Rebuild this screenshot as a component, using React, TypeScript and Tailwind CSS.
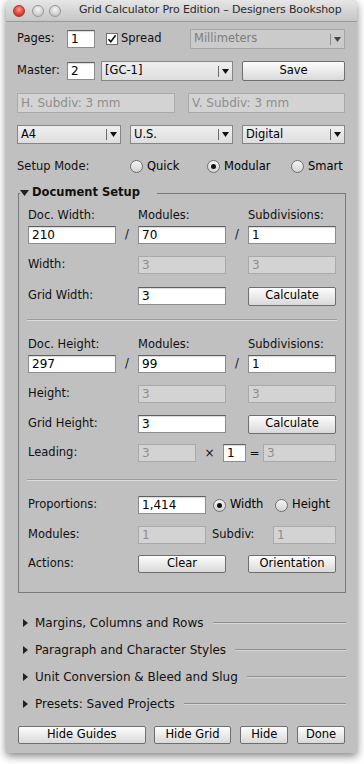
import React from "react";

/* ------------------------------------------------------------------ */
/*  Small controls                                                      */
/* ------------------------------------------------------------------ */
function TextField({ value, className = "" }: { value: string; className?: string }) {
  return (
    <div
      className={`h-[18px] bg-white border border-[#8c8c8c] border-t-[#5f5f5f] shadow-[inset_0_1px_1px_rgba(0,0,0,0.15)] pl-[3px] text-[12px] leading-[16px] text-black ${className}`}
    >
      {value}
    </div>
  );
}

function DisabledField({ value, className = "" }: { value: string; className?: string }) {
  return (
    <div
      className={`h-[18px] bg-[#d3d3d3] border border-[#a9a9a9] pl-[3px] text-[12px] leading-[16px] text-[#8e8e8e] ${className}`}
    >
      {value}
    </div>
  );
}

function Button({ label, className = "" }: { label: string; className?: string }) {
  return (
    <div
      className={`h-[18px] flex items-center justify-center bg-gradient-to-b from-[#fdfdfd] to-[#d9d9d9] border border-[#6f6f6f] rounded-[2px] text-[11.5px] text-black ${className}`}
    >
      {label}
    </div>
  );
}

function Popup({
  label,
  disabled = false,
  className = "",
}: {
  label: string;
  disabled?: boolean;
  className?: string;
}) {
  return (
    <div
      className={`flex items-center border ${
        disabled
          ? "bg-[#cbcbcb] border-[#a6a6a6] text-[#7d7d7d]"
          : "bg-gradient-to-b from-[#efefef] to-[#dedede] border-[#858585] text-black"
      } pl-[3px] text-[11.5px] ${className}`}
    >
      <span className="flex-1">{label}</span>
      <span className={`w-px h-[11px] ${disabled ? "bg-[#8d8d8d]" : "bg-[#6b6b6b]"}`} />
      <span className="w-[13px] flex justify-center">
        <svg width="7" height="5" viewBox="0 0 7 5">
          <path d="M0 0h7L3.5 5z" fill={disabled ? "#444" : "#111"} />
        </svg>
      </span>
    </div>
  );
}

function Radio({ label, checked = false, className = "" }: { label: string; checked?: boolean; className?: string }) {
  return (
    <div className={`flex items-center ${className}`}>
      <span className="w-[13px] h-[13px] rounded-full border border-[#6e6e6e] bg-gradient-to-b from-[#f4f4f4] to-[#d4d4d4] flex items-center justify-center">
        {checked && <span className="w-[5px] h-[5px] rounded-full bg-[#111]" />}
      </span>
      <span className="ml-[4px] text-[11.5px] text-black">{label}</span>
    </div>
  );
}

function Disclosure({ label }: { label: string }) {
  return (
    <div className="h-[27px] flex items-center pl-[6px]">
      <svg width="5" height="8" viewBox="0 0 5 8">
        <path d="M0 0l5 4-5 4z" fill="#222" />
      </svg>
      <span className="ml-[7px] text-[12px] text-[#111]">{label}</span>
      <div className="flex-1 ml-[9px] mr-[-1px] border-t border-[#8e8e8e] border-b border-b-[#d6d6d6]" />
    </div>
  );
}

function Separator() {
  return <div className="-ml-[1px] w-[310px] border-t border-[#9c9c9c] border-b border-b-[#dedede]" />;
}

/* ------------------------------------------------------------------ */
/*  App                                                                 */
/* ------------------------------------------------------------------ */
export default function App() {
  return (
    <div className="w-[364px] h-[764px] bg-white font-['DejaVu_Sans',sans-serif] text-[11.5px] text-[#111] overflow-hidden">
      <div className="ml-[6px] w-[351px] h-[753px] bg-[#c0c0c0] rounded-t-[5px] shadow-[0_3px_9px_rgba(0,0,0,0.5)] flex flex-col">
        {/* Title bar */}
        <div className="h-[22px] flex items-center rounded-t-[5px] bg-gradient-to-b from-[#e6e6e6] to-[#c6c6c6] border-b border-[#9a9a9a]">
          <span className="ml-[7px] w-[12px] h-[12px] rounded-full border border-[#a5362f] bg-[radial-gradient(circle_at_50%_35%,#ff9c92,#e0443a_55%,#b8241c)]" />
          <span className="ml-[7px] w-[12px] h-[12px] rounded-full border border-[#979797] bg-[radial-gradient(circle_at_50%_35%,#f6f6f6,#d0d0d0_60%,#b4b4b4)]" />
          <span className="ml-[5px] w-[12px] h-[12px] rounded-full border border-[#979797] bg-[radial-gradient(circle_at_50%_35%,#f6f6f6,#d0d0d0_60%,#b4b4b4)]" />
          <span className="ml-[18px] text-[11px] tracking-[-0.15px] text-[#2b2b2b]">
            Grid Calculator Pro Edition – Designers Bookshop
          </span>
        </div>

        <div className="pl-[11px] pr-[12px] pt-[7px]">
          {/* Pages */}
          <div className="h-[20px] flex items-center">
            <span className="w-[50px]">Pages:</span>
            <TextField value="1" className="w-[28px]" />
            <span className="ml-[11px] w-[12px] h-[12px] bg-white border border-[#6d6d6d] flex items-center justify-center">
              <svg width="10" height="10" viewBox="0 0 10 10">
                <path d="M1.5 5.2l2.3 2.6L8.6 1.2" fill="none" stroke="#111" strokeWidth="1.6" />
              </svg>
            </span>
            <span className="ml-[3px]">Spread</span>
            <Popup label="Millimeters" disabled className="ml-auto w-[155px] h-[20px]" />
          </div>

          {/* Master */}
          <div className="mt-[12px] h-[20px] flex items-center">
            <span className="w-[50px]">Master:</span>
            <TextField value="2" className="w-[28px]" />
            <Popup label="[GC-1]" className="ml-[6px] w-[132px] h-[20px]" />
            <Button label="Save" className="ml-[9px] w-[103px] !h-[20px]" />
          </div>

          {/* Subdivisions */}
          <div className="mt-[12px] h-[20px] flex items-center justify-between">
            <DisabledField value="H. Subdiv: 3 mm" className="w-[158px] !h-[20px] leading-[18px]" />
            <DisabledField value="V. Subdiv: 3 mm" className="w-[157px] !h-[20px] leading-[18px]" />
          </div>

          {/* Formats */}
          <div className="mt-[12px] h-[19px] flex items-center justify-between">
            <Popup label="A4" className="w-[104px] h-[19px]" />
            <Popup label="U.S." className="w-[103px] h-[19px]" />
            <Popup label="Digital" className="w-[103px] h-[19px]" />
          </div>

          {/* Setup mode */}
          <div className="mt-[13px] h-[19px] flex items-center">
            <span className="w-[113px]">Setup Mode:</span>
            <Radio label="Quick" className="w-[77px]" />
            <Radio label="Modular" checked className="w-[84px]" />
            <Radio label="Smart" />
          </div>

          {/* Document Setup */}
          <div className="relative mt-[17px] ml-[1px] w-[328px] border border-[#7a7a7a] pl-[9px] pt-[15px] pb-[19px]">
            <div className="absolute left-[1px] -top-[8px] h-[14px] flex items-center bg-[#c0c0c0] pr-[17px]">
              <svg width="9" height="6" viewBox="0 0 9 6">
                <path d="M0 0h9L4.5 6z" fill="#222" />
              </svg>
              <span className="ml-[3px] text-[11.5px] font-bold text-[#111]">Document Setup</span>
            </div>

            <div className="h-[14px] flex items-center">
              <span className="w-[110px]">Doc. Width:</span>
              <span className="w-[110px]">Modules:</span>
              <span>Subdivisions:</span>
            </div>
            <div className="mt-[3px] h-[18px] flex items-center">
              <TextField value="210" className="w-[88px]" />
              <span className="w-[22px] text-center">/</span>
              <TextField value="70" className="w-[88px]" />
              <span className="w-[22px] text-center">/</span>
              <TextField value="1" className="w-[88px]" />
            </div>
            <div className="mt-[12px] h-[18px] flex items-center">
              <span className="w-[110px]">Width:</span>
              <DisabledField value="3" className="w-[88px]" />
              <DisabledField value="3" className="ml-[22px] w-[88px]" />
            </div>
            <div className="mt-[13px] h-[18px] flex items-center">
              <span className="w-[110px]">Grid Width:</span>
              <TextField value="3" className="w-[88px]" />
              <Button label="Calculate" className="ml-[22px] w-[88px] !h-[19px]" />
            </div>

            <div className="mt-[14px]">
              <Separator />
            </div>

            <div className="mt-[17px] h-[14px] flex items-center">
              <span className="w-[110px]">Doc. Height:</span>
              <span className="w-[110px]">Modules:</span>
              <span>Subdivisions:</span>
            </div>
            <div className="mt-[3px] h-[18px] flex items-center">
              <TextField value="297" className="w-[88px]" />
              <span className="w-[22px] text-center">/</span>
              <TextField value="99" className="w-[88px]" />
              <span className="w-[22px] text-center">/</span>
              <TextField value="1" className="w-[88px]" />
            </div>
            <div className="mt-[12px] h-[18px] flex items-center">
              <span className="w-[110px]">Height:</span>
              <DisabledField value="3" className="w-[88px]" />
              <DisabledField value="3" className="ml-[22px] w-[88px]" />
            </div>
            <div className="mt-[12px] h-[18px] flex items-center">
              <span className="w-[110px]">Grid Height:</span>
              <TextField value="3" className="w-[88px]" />
              <Button label="Calculate" className="ml-[22px] w-[88px] !h-[19px]" />
            </div>
            <div className="mt-[11px] h-[18px] flex items-center">
              <span className="w-[110px]">Leading:</span>
              <DisabledField value="3" className="w-[58px]" />
              <span className="w-[27px] text-center text-[12px]">×</span>
              <TextField value="1" className="w-[23px]" />
              <span className="w-[17px] text-center text-[12px]">=</span>
              <DisabledField value="3" className="w-[73px]" />
            </div>

            <div className="mt-[17px]">
              <Separator />
            </div>

            <div className="mt-[15px] h-[18px] flex items-center">
              <span className="w-[110px]">Proportions:</span>
              <TextField value="1,414" className="w-[68px]" />
              <Radio label="Width" checked className="ml-[7px] w-[62px]" />
              <Radio label="Height" />
            </div>
            <div className="mt-[12px] h-[18px] flex items-center">
              <span className="w-[110px]">Modules:</span>
              <DisabledField value="1" className="w-[68px]" />
              <span className="ml-[6px] w-[61px]">Subdiv:</span>
              <DisabledField value="1" className="w-[63px]" />
            </div>
            <div className="mt-[11px] h-[18px] flex items-center">
              <span className="w-[110px]">Actions:</span>
              <Button label="Clear" className="w-[88px]" />
              <Button label="Orientation" className="ml-[22px] w-[88px]" />
            </div>
          </div>

          {/* Collapsed sections */}
          <div className="mt-[16px]">
            <Disclosure label="Margins, Columns and Rows" />
            <Disclosure label="Paragraph and Character Styles" />
            <Disclosure label="Unit Conversion & Bleed and Slug" />
            <Disclosure label="Presets: Saved Projects" />
          </div>

          {/* Bottom buttons */}
          <div className="mt-[9px] ml-[1px] flex items-center">
            <Button label="Hide Guides" className="w-[128px]" />
            <Button label="Hide Grid" className="ml-[8px] w-[78px]" />
            <Button label="Hide" className="ml-[9px] w-[48px]" />
            <Button label="Done" className="ml-[9px] w-[48px]" />
          </div>
        </div>
      </div>
    </div>
  );
}
